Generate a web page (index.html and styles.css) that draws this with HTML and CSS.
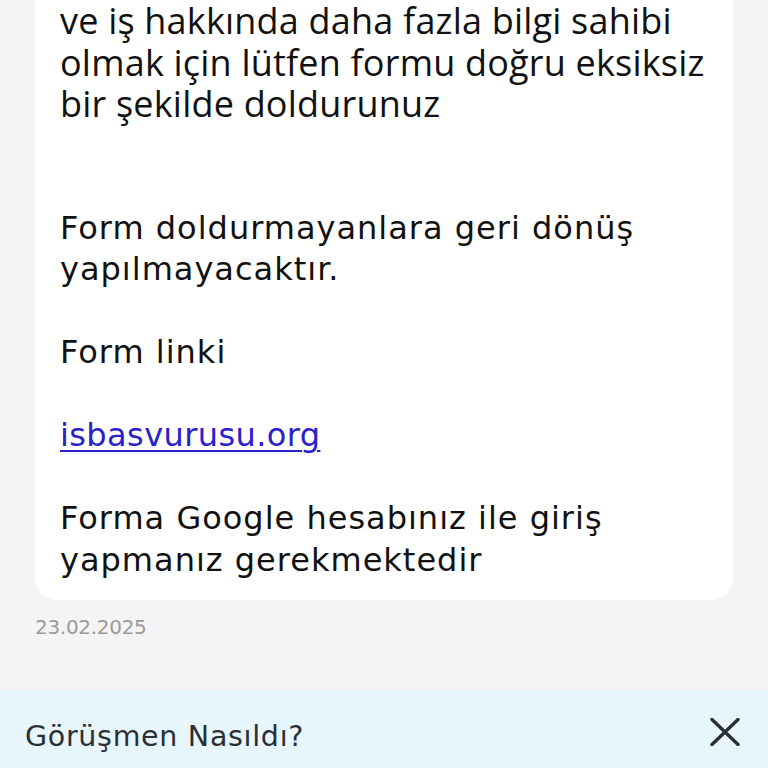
FILE: index.html
```html
<!DOCTYPE html>
<html lang="tr">
<head>
<meta charset="utf-8">
<link rel="stylesheet" href="styles.css">
</head>
<body>
<div class="chat">
  <div class="bubble">
    <p class="lead">ve iş hakkında daha fazla bilgi sahibi
olmak için lütfen formu doğru eksiksiz
bir şekilde doldurunuz</p>
    <p class="body">

Form doldurmayanlara geri dönüş
yapılmayacaktır.

Form linki

<a href="#" class="link">isbasvurusu.org</a>

Forma Google hesabınız ile giriş
yapmanız gerekmektedir</p>
  </div>
  <div class="date">23.02.2025</div>
</div>
<div class="feedback">
  <span class="feedback-title">Görüşmen Nasıldı?</span>
  <svg class="close" width="30" height="28" viewBox="0 0 30 28"><path d="M2 1.5 L28 26.5 M28 1.5 L2 26.5" stroke="#2b2f33" stroke-width="3.4" stroke-linecap="round" fill="none"/></svg>
</div>
</body>
</html>
```
FILE: styles.css
```css
html, body { margin: 0; padding: 0; }
body {
  width: 768px;
  height: 768px;
  overflow: hidden;
  background: #f4f4f4;
  position: relative;
  font-family: "DejaVu Sans", sans-serif;
}
.chat {
  padding: 0 35px;
}
.bubble {
  background: #ffffff;
  border-radius: 0 0 22px 22px;
  padding: 0 25px 19px 25px;
  color: #111111;
}
.lead {
  margin: 0;
  white-space: pre-line;
  font-family: "Open Sans", sans-serif;
  font-size: 36px;
  letter-spacing: 0.2px;
  line-height: 41.5px;
}
.body {
  margin: 0;
  white-space: pre-line;
  font-size: 32px;
  letter-spacing: 1px;
  line-height: 41.5px;
}
.link { color: #2a20cc; text-decoration: underline; text-decoration-thickness: 2px; text-underline-offset: 4px; letter-spacing: 0.4px; }
.date {
  margin-top: 15px;
  color: #9a9a9a;
  font-size: 20px;
  letter-spacing: -0.3px;
}
.feedback {
  position: absolute;
  left: 0; right: 0; bottom: 0;
  height: 78px;
  background: #e7f5fc;
  display: flex;
  align-items: center;
  justify-content: space-between;
  padding: 14px 28px 0 25px;
  box-sizing: border-box;
}
.feedback-title {
  font-size: 28.5px;
  letter-spacing: 0.7px;
  color: #2b2f33;
}
.close { display: block; margin-top: -8px; }
```
